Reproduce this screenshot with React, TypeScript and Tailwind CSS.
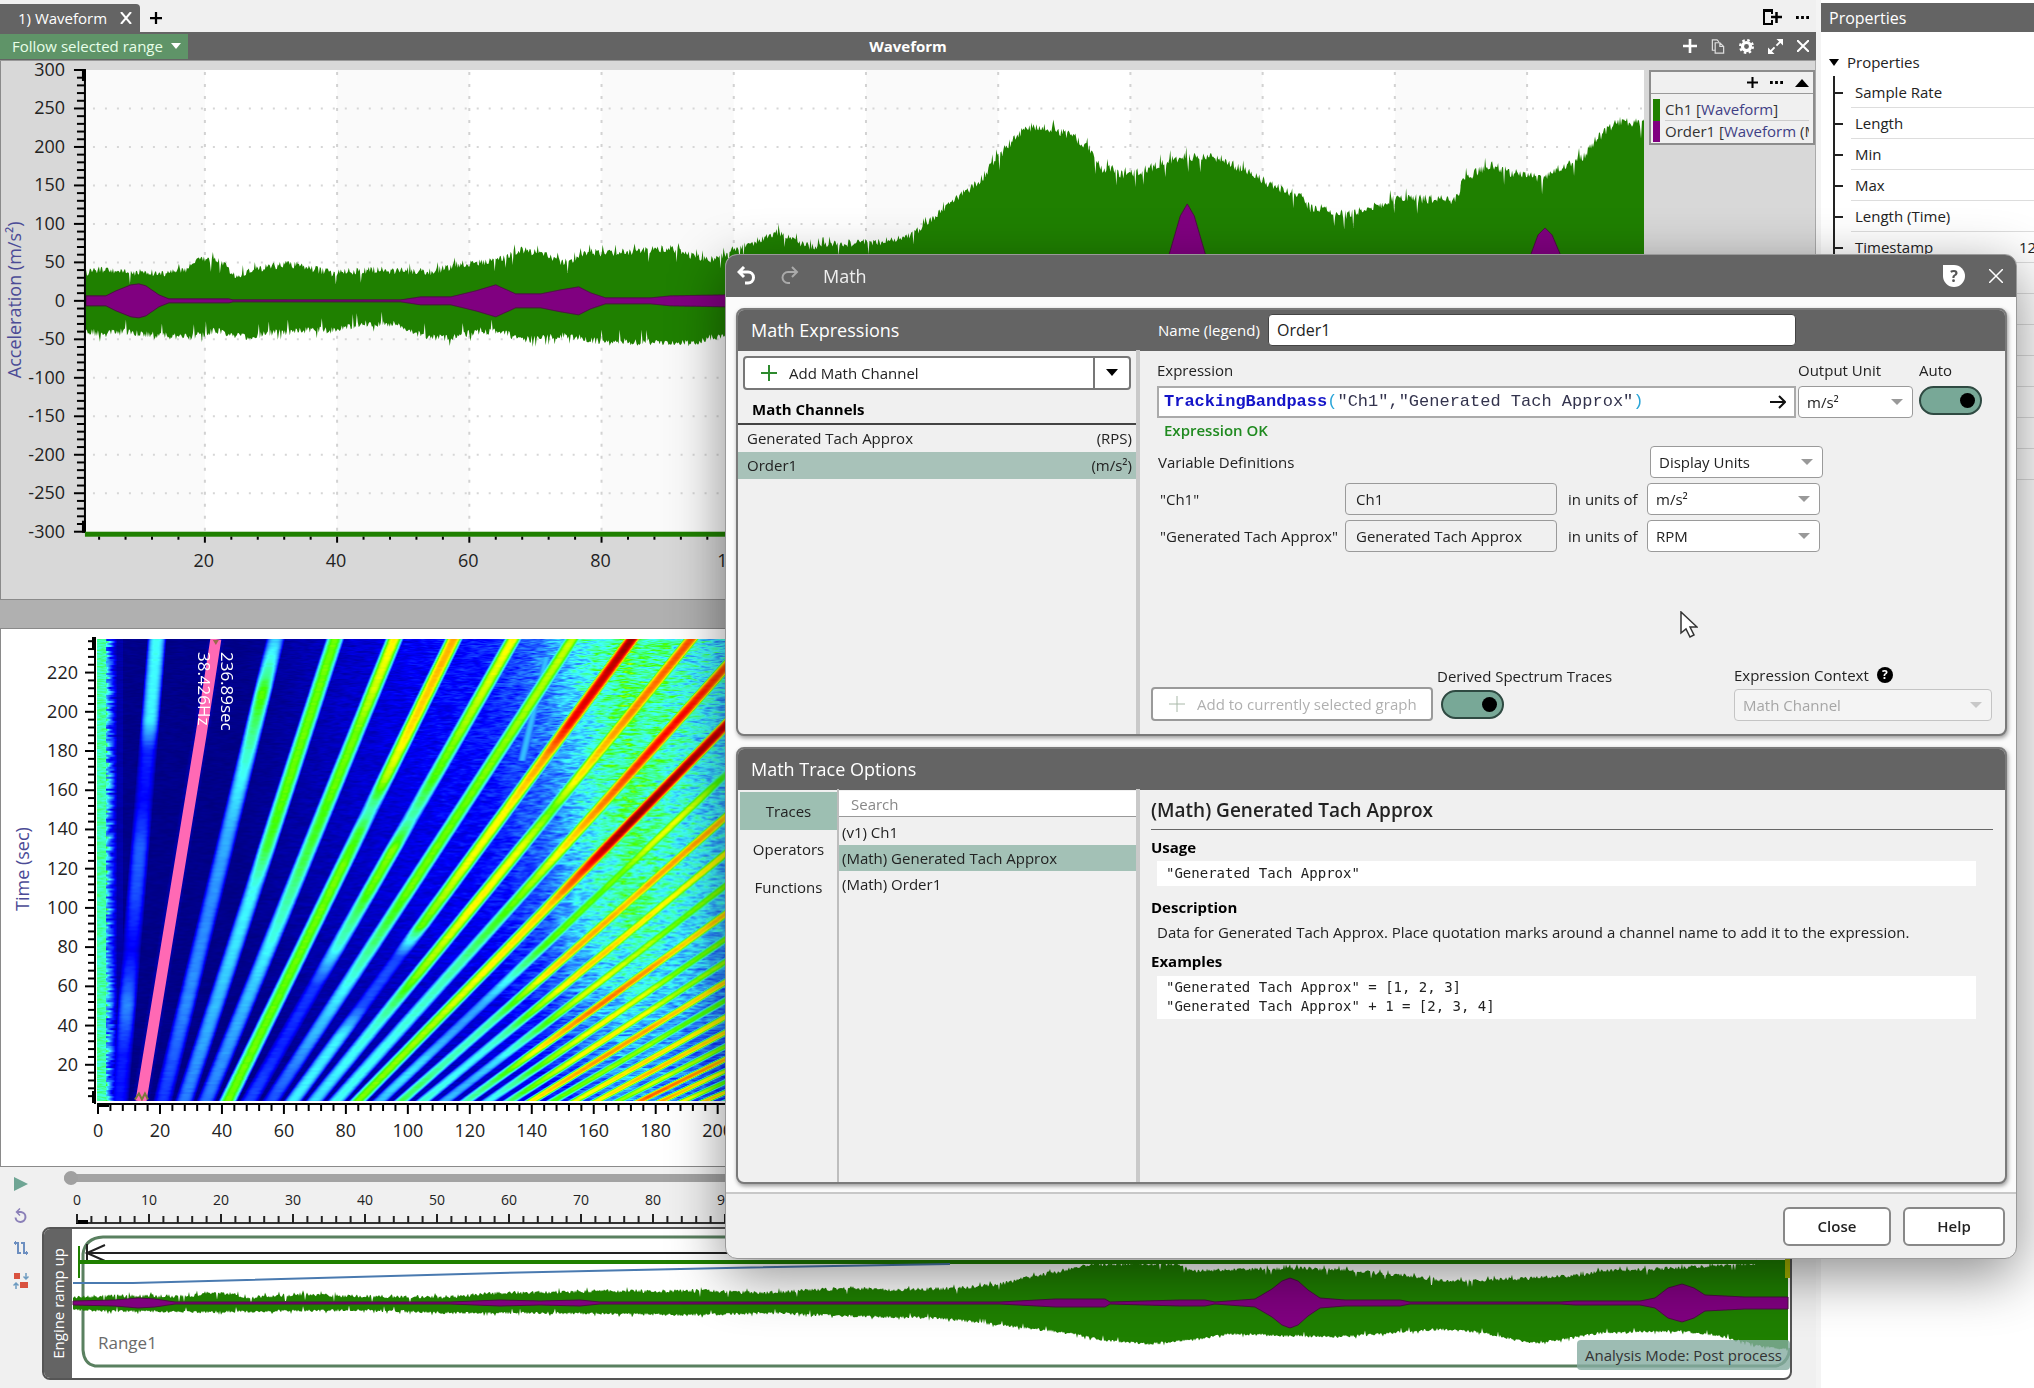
import { useLayoutEffect, useRef, useState } from 'react';
import type { ReactNode } from 'react';

type Point = [number, number];

const CH1_TOP: Point[] = [
  [85, 273], [100, 269], [120, 271], [135, 273], [165, 273], [187, 271], [190, 263], [205, 259], [222, 262], [232, 276],
  [250, 271], [285, 264], [300, 266], [330, 273], [370, 270], [400, 271], [430, 272], [445, 268], [460, 264], [480, 263],
  [500, 258], [520, 250], [545, 255], [560, 262], [575, 260], [585, 252], [600, 253], [630, 252], [670, 248], [690, 256],
  [710, 260], [725, 255], [735, 248], [760, 240], [778, 232], [800, 243], [810, 247], [835, 244], [880, 242], [905, 237],
  [920, 229], [940, 212], [960, 196], [980, 180], [1000, 154], [1010, 143], [1022, 130], [1035, 126], [1055, 130], [1075, 138],
  [1090, 150], [1100, 168], [1115, 170], [1125, 177], [1135, 172], [1150, 168], [1170, 160], [1185, 157], [1220, 158], [1235, 166],
  [1250, 174], [1265, 182], [1280, 188], [1300, 196], [1310, 208], [1325, 208], [1345, 215], [1370, 209], [1395, 198], [1450, 200],
  [1459, 198], [1462, 180], [1490, 165], [1510, 172], [1530, 175], [1541, 180], [1560, 168], [1585, 155], [1595, 140], [1610, 128],
  [1620, 121], [1645, 124],
];

const CH1_BOTTOM: Point[] = [
  [85, 331], [100, 334], [125, 332], [150, 335], [190, 337], [215, 331], [250, 338], [275, 332], [330, 330], [365, 324],
  [395, 324], [415, 334], [445, 339], [480, 331], [500, 332], [525, 340], [565, 335], [600, 342], [640, 342], [690, 344],
  [710, 338], [726, 337], [1645, 420],
];

const ORDER1_HALF: Point[] = [
  [85, 5], [105, 5], [115, 10], [130, 16], [138, 17], [145, 15], [158, 6], [168, 2], [175, 2], [228, 2], [232, 1], [400, 1],
  [420, 4], [450, 4], [475, 10], [495, 16], [515, 7], [540, 7], [560, 11], [578, 14], [590, 8], [605, 3], [650, 3], [670, 5],
  [726, 6], [1150, 6], [1169, 47], [1180, 85], [1187, 97], [1194, 85], [1205, 47], [1224, 6], [1515, 6], [1531, 47], [1538, 66],
  [1545, 73], [1552, 66], [1560, 47], [1576, 6], [1645, 6],
];

const TRACK_TOP: Point[] = [
  [73, 1297], [100, 1296], [190, 1296], [205, 1293], [235, 1294], [245, 1298], [300, 1294], [340, 1296], [440, 1297], [500, 1293],
  [600, 1291], [720, 1291], [760, 1293], [850, 1288], [900, 1290], [960, 1288], [1000, 1284], [1030, 1277], [1060, 1271],
  [1090, 1264], [1180, 1264], [1190, 1271], [1300, 1268], [1345, 1270], [1400, 1275], [1440, 1280], [1465, 1281], [1550, 1277],
  [1585, 1275], [1600, 1271], [1680, 1268], [1720, 1265], [1788, 1262],
];

const TRACK_BOTTOM: Point[] = [
  [73, 1310], [110, 1311], [200, 1312], [360, 1310], [450, 1313], [550, 1313], [690, 1315], [770, 1313], [850, 1316], [940, 1318],
  [1000, 1325], [1060, 1332], [1110, 1341], [1150, 1344], [1200, 1339], [1225, 1334], [1340, 1337], [1440, 1329], [1480, 1332],
  [1530, 1343], [1560, 1340], [1600, 1333], [1680, 1331], [1720, 1336], [1760, 1346], [1788, 1350],
];

const TRACK_HALF: Point[] = [
  [73, 2], [115, 3], [138, 5], [155, 4], [175, 1], [450, 1], [500, 3], [540, 2], [580, 3], [600, 1], [1000, 1], [1055, 4],
  [1105, 4], [1110, 1], [1180, 3], [1205, 3], [1215, 1], [1255, 4], [1272, 14], [1282, 22], [1290, 25], [1298, 22], [1308, 13],
  [1320, 5], [1345, 3], [1400, 3], [1410, 1], [1560, 1], [1575, 2], [1640, 2], [1655, 5], [1668, 15], [1682, 19], [1694, 15],
  [1705, 8], [1745, 6], [1790, 6],
];

// Level (0..1) of each engine order over time in seconds
const ORDER_LEVELS: Point[][] = [
  [[0, 0.14], [25, 0.15], [50, 0.26], [78, 0.12], [105, 0.2], [130, 0.22], [155, 0.13], [180, 0.16], [195, 0.36], [237, 0.38]],
  [[0, 0.05], [237, 0.05]],
  [[0, 0.17], [50, 0.26], [100, 0.26], [140, 0.3], [170, 0.38], [190, 0.46], [210, 0.54], [220, 0.44], [237, 0.32]],
  [[0, 0.24], [60, 0.32], [110, 0.38], [130, 0.5], [160, 0.54], [237, 0.55]],
  [[0, 0.24], [60, 0.32], [90, 0.4], [120, 0.48], [160, 0.54], [190, 0.55], [210, 0.6], [237, 0.64]],
  [[0, 0.55], [60, 0.54], [120, 0.55], [140, 0.5], [150, 0.42], [165, 0.58], [190, 0.66], [237, 0.71]],
  [[0, 0.2], [30, 0.16], [60, 0.18], [80, 0.4], [110, 0.54], [130, 0.56], [145, 0.42], [165, 0.52], [190, 0.57], [237, 0.64]],
  [[0, 0.2], [50, 0.34], [80, 0.46], [110, 0.55], [150, 0.54], [237, 0.6]],
  [[0, 0.36], [35, 0.36], [50, 0.2], [75, 0.2], [90, 0.54], [120, 0.62], [150, 0.64], [175, 0.72], [195, 0.88], [237, 0.97]],
  [[0, 0.34], [40, 0.4], [65, 0.56], [100, 0.64], [130, 0.62], [150, 0.54], [165, 0.64], [195, 0.74], [237, 0.8]],
  [[0, 0.38], [30, 0.38], [60, 0.42], [90, 0.5], [120, 0.6], [145, 0.72], [180, 0.86], [200, 0.87], [237, 0.76]],
  [[0, 0.55], [40, 0.58], [70, 0.64], [100, 0.68], [115, 0.8], [130, 0.94], [145, 0.99], [170, 0.97], [195, 0.92], [237, 0.8]],
];

const FREQUENCY_LEVELS: Point[] = [
  [0, 0.3], [80, 0.34], [110, 0.38], [130, 0.46], [150, 0.57], [165, 0.68], [178, 0.71], [190, 0.63], [205, 0.56], [550, 0.5],
];

const BACKGROUND_LEVELS: Point[] = [
  [0, 0.01], [45, 0.01], [60, 0.03], [90, 0.06], [125, 0.1], [145, 0.2], [160, 0.35], [172, 0.43], [182, 0.38], [205, 0.28], [550, 0.27],
];

const COLOR_STOPS: [number, number, number, number][] = [
  [0, 0, 0, 128],
  [0.125, 0, 0, 255],
  [0.25, 40, 130, 255],
  [0.37, 64, 255, 255],
  [0.45, 64, 255, 150],
  [0.52, 64, 255, 0],
  [0.63, 255, 255, 0],
  [0.75, 255, 128, 0],
  [0.87, 255, 0, 0],
  [1, 128, 0, 0],
];

const PROPERTY_ROWS = ['Sample Rate', 'Length', 'Min', 'Max', 'Length (Time)', 'Timestamp', '', '', '', '', '', '', ''];

function interpolate(points: Point[], x: number) {
  if (x <= points[0][0]) return points[0][1];
  for (let i = 1; i < points.length; i++) {
    if (x <= points[i][0]) {
      const [x0, y0] = points[i - 1];
      const [x1, y1] = points[i];
      return y0 + ((y1 - y0) * (x - x0)) / (x1 - x0);
    }
  }
  return points[points.length - 1][1];
}

function hash(a: number, b: number) {
  let h = Math.imul(a, 374761393) + Math.imul(b, 668265263);
  h = Math.imul(h ^ (h >>> 13), 1274126177);
  return ((h ^ (h >>> 16)) >>> 0) / 4294967296;
}

// Noise that is smooth along x and changes from row to row
function streak(x: number, y: number, length: number) {
  const p = x / length + hash(y, 3);
  const i = Math.floor(p);
  const a = hash(i, y);
  return a + (hash(i + 1, y) - a) * (p - i) - 0.5;
}

function envelope(from: number, to: number, top: (x: number) => number, bottom: (x: number) => number) {
  const upper: string[] = [];
  const lower: string[] = [];
  for (let x = from; x <= to; x++) {
    upper.push(`${x},${top(x).toFixed(1)}`);
    lower.unshift(`${x},${bottom(x).toFixed(1)}`);
  }
  return upper.concat(lower).join(' ');
}

function spike(x: number, seed: number, size: number) {
  const n = hash(x, seed);
  if (n > 0.97) return -size;
  if (n < 0.02) return size * 1.5;
  return (n - 0.5) * size;
}

const range = (start: number, end: number, step: number) =>
  Array.from({ length: Math.floor((end - start) / step) + 1 }, (_, i) => start + i * step);

const waveX = (v: number) => 71.7 + v * 6.615;
const waveY = (v: number) => 240 - v * 0.77;

function WaveformChart() {
  const green = envelope(
    85,
    1644,
    (x) => interpolate(CH1_TOP, x) - 61 + spike(x, 1, x > 950 ? 10 : 8),
    (x) => interpolate(CH1_BOTTOM, x) - 61 - spike(x, 2, 8),
  );
  const purple = envelope(
    85,
    1644,
    (x) => 240 - interpolate(ORDER1_HALF, x),
    (x) => 240 + interpolate(ORDER1_HALF, x),
  );
  return (
    <svg viewBox="0 0 1649 538" className="block min-w-0 flex-1" role="img" aria-label="Waveform">
      <rect x="84" y="9" width="1560" height="463" fill="#fff" />
      {range(0, 200, 40).map((v) => (
        <rect key={v} x={Math.max(85, waveX(v))} y="9" width={waveX(v + 20) - Math.max(85, waveX(v))} height="463" fill="#fafafa" />
      ))}
      {range(-250, 250, 50).map((v) => (
        <line key={v} x1="92" x2="1644" y1={waveY(v)} y2={waveY(v)} stroke="#d6d6d6" strokeWidth="2" strokeDasharray="2 10" />
      ))}
      {range(20, 220, 20).map((v) => (
        <line key={v} y1="11" y2="472" x1={waveX(v)} x2={waveX(v)} stroke="#d2d2d2" strokeWidth="2" strokeDasharray="3 9" />
      ))}
      <polygon points={green} fill="#1f8000" />
      <polygon points={purple} fill="#800080" stroke="#4a1040" strokeWidth="1" />
      <line x1="84" x2="84" y1="8" y2="472" stroke="#000" strokeWidth="2" />
      <rect x="81" y="9" width="4" height="11" />
      <rect x="81" y="460" width="4" height="12" />
      {range(-300, 300, 10).map((v) => (
        <line key={v} x1={v % 50 ? 76 : 73} x2="84" y1={waveY(v)} y2={waveY(v)} stroke="#000" strokeWidth="2" />
      ))}
      {range(-300, 300, 50).map((v) => (
        <text key={v} x="64" y={waveY(v) + 6} textAnchor="end" fontSize="18" fill="#222">
          {v}
        </text>
      ))}
      <rect x="84" y="471" width="1560" height="5" fill="#1f8000" />
      {range(4, 236, 4).map((v) => (
        <line key={v} x1={waveX(v)} x2={waveX(v)} y1="476" y2={v % 20 ? 479 : 482} stroke="#000" strokeWidth="2" />
      ))}
      {range(20, 220, 20).map((v) => (
        <text key={v} x={waveX(v) - 1} y="506" textAnchor="middle" fontSize="18" fill="#222">
          {v}
        </text>
      ))}
      <text transform="translate(20 239) rotate(-90)" textAnchor="middle" fontSize="18" fill="#4b4b96">
        Acceleration (m/s²)
      </text>
    </svg>
  );
}

function levelColor(v: number): [number, number, number] {
  let i = 1;
  while (i < COLOR_STOPS.length - 1 && v > COLOR_STOPS[i][0]) i++;
  const [v0, r0, g0, b0] = COLOR_STOPS[i - 1];
  const [v1, r1, g1, b1] = COLOR_STOPS[i];
  const k = (v - v0) / (v1 - v0);
  return [r0 + (r1 - r0) * k, g0 + (g1 - g0) * k, b0 + (b1 - b0) * k];
}

function Spectrogram() {
  const ref = useRef<HTMLCanvasElement>(null);

  useLayoutEffect(() => {
    const canvas = ref.current;
    const ctx = canvas?.getContext('2d');
    if (!canvas || !ctx) return;
    const { width, height } = canvas;
    const image = ctx.createImageData(width, height);
    for (let y = 0; y < height; y++) {
      const t = 236.9 - y / 1.961;
      const f1 = 6.95 + t * 0.0515;
      const row = y >> 1;
      const floor = 0.6 + 0.4 * Math.min(1, t / 100);
      for (let x = 0; x < width; x++) {
        const f = x / 3.102;
        const noise = streak(x, row, 7);
        const fine = streak(x, y + 9000, 4);
        let level = interpolate(BACKGROUND_LEVELS, f) * floor;
        if (f > 60) level += Math.min(0.05, (f - 60) * 0.001) * (t / 237);
        level += (noise * 0.6 + fine * 0.5) * (0.02 + Math.min(0.24, level * 0.65));
        if (x < 9) level = 0.43 + fine * 0.1;
        else if (x < 26) level += Math.max(0, (0.32 + noise * 0.4) * (1 - (x - 8) / 12)) + 0.03;

        // Structural resonance that crosses the orders near the top
        if (t > 175 && t < 228) {
          const r = Math.abs(f - 137 - (t - 175) * 0.15) * 3.102;
          level = Math.max(level, 0.31 * (1 - Math.pow(r / 7, 2)));
        }

        const order = Math.max(1, Math.round(f / f1));
        const d = Math.abs(f - order * f1) * 3.102;
        let peak = interpolate(FREQUENCY_LEVELS, f);
        if (order <= 12) peak = interpolate(ORDER_LEVELS[order - 1], t);
        else peak += 0.08 * Math.sin(order * 2.3) + 0.06 * Math.sin(t / 11 + order);
        const skirt = order > 12 ? 9 : 10;
        level = Math.max(level, peak * (1 - Math.pow(d / skirt, 2.8)) + noise * 0.02);

        const [r, g, b] = levelColor(Math.min(1, Math.max(0, level)));
        const i = (y * width + x) * 4;
        image.data[i] = r;
        image.data[i + 1] = g;
        image.data[i + 2] = b;
        image.data[i + 3] = 255;
      }
    }
    ctx.putImageData(image, 0, 0);
  }, []);

  return (
    <div className="relative">
      <canvas ref={ref} width={1696} height={463} className="block w-full" />
      <svg viewBox="0 0 1696 463" className="absolute inset-0 h-full w-full">
        <polyline points="44,463 64,341 84,219 104,97 119,0" fill="none" stroke="#ff69b4" strokeWidth="11" />
        <path d="M38 461l4-6 3 6 3-6 3 6" fill="none" stroke="#7a7a3a" strokeWidth="2" />
        <path d="M116 1h6l-3 5z" fill="#9a6a4a" />
        <g fill="#fff" fontSize="17">
          <text transform="translate(101 13) rotate(90)">38.426Hz</text>
          <text transform="translate(124 13) rotate(90)">236.89sec</text>
        </g>
      </svg>
    </div>
  );
}

function SpectrogramPanel() {
  const ty = (t: number) => 475 - t * 1.961;
  const fx = (f: number) => 1 + f * 3.102;
  return (
    <section className="flex items-start border border-[#8a8a8a] bg-white" aria-label="Spectrogram">
      <svg viewBox="0 0 96 500" className="block w-24 shrink-0">
        <line x1="94" x2="94" y1="8" y2="475" stroke="#000" strokeWidth="2" />
        <rect x="91" y="8" width="4" height="13" />
        <rect x="91" y="462" width="4" height="12" />
        {range(4, 236, 4).map((t) => (
          <line key={t} x1={t % 20 ? 87 : 84} x2="94" y1={ty(t)} y2={ty(t)} stroke="#000" strokeWidth="2" />
        ))}
        {range(20, 220, 20).map((t) => (
          <text key={t} x="77" y={ty(t) + 6} textAnchor="end" fontSize="18" fill="#222">
            {t}
          </text>
        ))}
        <text transform="translate(28 240) rotate(-90)" textAnchor="middle" fontSize="18" fill="#4b4b96">
          Time (sec)
        </text>
      </svg>
      <div className="min-w-0 flex-1 pt-[10px] pr-6">
        <Spectrogram />
        <svg viewBox="0 0 1696 65" className="block w-full overflow-visible">
          <line x1="0" x2="1696" y1="3" y2="3" stroke="#000" strokeWidth="2" />
          <rect x="0" y="2" width="12" height="4" />
          {range(0, 540, 4).map((f) => (
            <line key={f} x1={fx(f)} x2={fx(f)} y1="3" y2={f % 20 ? 10 : 13} stroke="#000" strokeWidth="2" />
          ))}
          {range(0, 540, 20).map((f) => (
            <text key={f} x={fx(f)} y="36" textAnchor="middle" fontSize="18" fill="#222">
              {f}
            </text>
          ))}
        </svg>
      </div>
    </section>
  );
}

function Timeline() {
  const rx = (v: number) => 35 + v * 7.2;
  const green = envelope(
    73,
    1788,
    (x) => interpolate(TRACK_TOP, x) + spike(x, 5, 4),
    (x) => interpolate(TRACK_BOTTOM, x) - spike(x, 6, 3),
  );
  const purple = envelope(
    73,
    1788,
    (x) => 1303 - interpolate(TRACK_HALF, x),
    (x) => 1303 + interpolate(TRACK_HALF, x),
  );
  return (
    <section className="flex bg-[#f0f0f0] pr-6" aria-label="Timeline">
      <div className="flex w-[42px] shrink-0 flex-col items-center gap-4 pt-[9px]">
        <button type="button" aria-label="Play">
          <svg width="16" height="16" viewBox="0 0 16 16" className="block">
            <path d="M1 1l14 7-14 7z" fill="#6fa594" />
          </svg>
        </button>
        <button type="button" aria-label="Loop">
          <svg width="16" height="16" viewBox="0 0 16 16" className="block" fill="none" stroke="#8b80b8" strokeWidth="2">
            <path d="M4 4h4a5 5 0 1 1-5.500 5.500" />
            <path d="M7 0.500L3.500 4 7 7.500" strokeWidth="1.500" />
          </svg>
        </button>
        <button type="button" aria-label="Swap range">
          <svg width="16" height="16" viewBox="0 0 16 16" className="block" fill="none" stroke="#6d8fc0" strokeWidth="2">
            <path d="M1 3h4v10h3M15 13h-4V3H8" />
            <path d="M3 1L1 3l2 2M13 11l2 2-2 2" strokeWidth="1" />
          </svg>
        </button>
        <button type="button" aria-label="Arrange">
          <svg width="16" height="18" viewBox="0 0 16 18" className="block">
            <path d="M1 1h6v6H1zM7 10h8v6H7z" fill="#d9523f" />
            <path d="M13 1v6M10.500 4.500L13 7l2.500-2.500M3 17v-6M0.500 13.500L3 11l2.500 2.500" fill="none" stroke="#6d9bc0" strokeWidth="1.500" />
          </svg>
        </button>
      </div>
      <div className="min-w-0 flex-1">
        <input
          type="range"
          min={0}
          max={240}
          defaultValue={0}
          aria-label="Playback position"
          className="mt-[7px] ml-[22px] block h-2 w-[calc(100%-22px)] appearance-none rounded bg-[#a3a3a3] [&::-webkit-slider-thumb]:h-[14px] [&::-webkit-slider-thumb]:w-[14px] [&::-webkit-slider-thumb]:appearance-none [&::-webkit-slider-thumb]:rounded-full [&::-webkit-slider-thumb]:bg-[#a0a0a0]"
        />
        <svg viewBox="0 0 1750 45" className="block w-full">
          <line x1="34" x2="1750" y1="41" y2="41" stroke="#333" strokeWidth="2" />
          <rect x="34" y="38" width="12" height="4" />
          {range(0, 236, 2).map((v) => (
            <line key={v} x1={rx(v)} x2={rx(v)} y1={v % 10 ? 34 : 32} y2="41" stroke="#222" strokeWidth="2" />
          ))}
          {range(0, 230, 10).map((v) => (
            <text key={v} x={rx(v)} y="23" textAnchor="middle" fontSize="14" fontWeight="500" fill="#222">
              {v}
            </text>
          ))}
        </svg>
        <div className="flex overflow-hidden rounded-lg border-2 border-[#555] bg-white">
          <div className="flex w-7 shrink-0 items-center justify-center bg-[#646464]">
            <span className="rotate-180 text-[15px] font-medium whitespace-nowrap text-white [writing-mode:vertical-rl]">Engine ramp up</span>
          </div>
          <div className="relative min-w-0 flex-1">
            <svg viewBox="72 1229 1718 149" className="block w-full">
              <path d="M83 1262v-8q2-16 20-17H1790M83 1262V1350q1 14 12 16H1776q12-2 14-18" fill="none" stroke="#5a8060" strokeWidth="3" />
              <path d="M87 1253H1790M105 1245l-18 8 18 8" fill="none" stroke="#222" strokeWidth="2" />
              <path d="M87 1244v18" stroke="#222" strokeWidth="2" />
              <path d="M79 1246v32" stroke="#1f8000" strokeWidth="2" />
              <path d="M79 1262H1790" stroke="#1f8000" strokeWidth="4" />
              <path d="M73 1283h60L500 1273l226-5 224-4" fill="none" stroke="#4a7ab0" strokeWidth="2" />
              <polygon points={green} fill="#1f8000" />
              <polygon points={purple} fill="#800080" stroke="#4a1040" strokeWidth="1" />
              <rect x="1785" y="1259" width="5" height="19" fill="#a8b400" />
              <text x="98" y="1349" fontSize="17" fill="#6a6a6a">
                Range1
              </text>
            </svg>
            <div className="absolute right-0 bottom-2 rounded bg-[#85aba0]/80 px-2 py-1 text-[15px] text-[#333]">Analysis Mode: Post process</div>
          </div>
        </div>
      </div>
    </section>
  );
}

function Dropdown({ label, value, className, disabled }: { label: string; value: string; className: string; disabled?: boolean }) {
  return (
    <span className={`relative block ${className}`}>
      <select
        aria-label={label}
        disabled={disabled}
        className={`block h-8 w-full appearance-none rounded border px-2 text-[15px] ${
          disabled ? 'border-[#c4c4c4] bg-[#f4f4f4] text-[#a6a6a6]' : 'border-[#9a9a9a] bg-white text-[#222]'
        }`}
      >
        <option>{value}</option>
      </select>
      <svg viewBox="0 0 12 8" className={`pointer-events-none absolute top-3 right-[10px] h-2 w-3 ${disabled ? 'fill-[#c8c8c8]' : 'fill-[#999]'}`}>
        <path d="M0 1h12L6 7z" />
      </svg>
    </span>
  );
}

function Toggle({ label }: { label: string }) {
  const [on, setOn] = useState(true);
  return (
    <input
      type="checkbox"
      aria-label={label}
      checked={on}
      onChange={(e) => setOn(e.target.checked)}
      className="relative block h-[29px] w-[63px] appearance-none rounded-full border-2 border-[#2f4a42] bg-[#b8b8b8] before:absolute before:top-[5px] before:left-[5px] before:h-[15px] before:w-[15px] before:rounded-full before:bg-black checked:bg-[#78a897] checked:before:left-[39px]"
    />
  );
}

function Plus({ className }: { className: string }) {
  return (
    <svg viewBox="0 0 16 16" className={className} fill="none" stroke="currentColor">
      <path d="M8 0v16M0 8h16" />
    </svg>
  );
}

function Panel({ title, extra, children }: { title: string; extra?: ReactNode; children: ReactNode }) {
  return (
    <section className="flex flex-col overflow-hidden rounded-lg border-2 border-[#7a7a7a] bg-[#f0f0f0] shadow-[1px_2px_4px_rgba(0,0,0,0.4)]">
      <header className="-m-px flex h-[42px] items-center bg-[#646464]">
        <h2 className="w-[405px] shrink-0 pl-[14px] text-lg text-white">{title}</h2>
        {extra}
      </header>
      {children}
    </section>
  );
}

function MathExpressions() {
  const [name, setName] = useState('Order1');
  const [selected, setSelected] = useState('Order1');
  const channels = [
    { name: 'Generated Tach Approx', unit: '(RPS)' },
    { name: 'Order1', unit: '(m/s²)' },
  ];
  return (
    <Panel
      title="Math Expressions"
      extra={
        <div className="flex flex-1 items-center gap-2 pl-4">
          <label htmlFor="legend-name" className="w-[102px] text-[15px] whitespace-nowrap text-white">
            Name (legend)
          </label>
          <input
            id="legend-name"
            value={name}
            onChange={(e) => setName(e.target.value)}
            className="h-8 w-[528px] rounded border border-[#444] bg-white px-2 text-base text-[#222]"
          />
        </div>
      }
    >
      <div className="flex h-[384px]">
        <div className="w-[402px] shrink-0 border-r-4 border-[#c9c9c9] pt-[6px]">
          <div className="mx-[5px] flex h-[34px] rounded border-2 border-[#777] bg-white text-[15px] text-[#222]">
            <button type="button" className="flex flex-1 items-center gap-3 pl-4">
              <Plus className="h-4 w-4 stroke-2 text-[#2d8a2d]" />
              Add Math Channel
            </button>
            <button type="button" aria-label="More channel types" className="flex w-9 items-center justify-center border-l-2 border-[#777]">
              <svg viewBox="0 0 12 8" className="h-2 w-3">
                <path d="M0 0h12L6 7z" />
              </svg>
            </button>
          </div>
          <table className="mt-[5px] w-full text-[15px] leading-[27px] text-[#222]">
            <thead>
              <tr className="border-b-2 border-[#444]">
                <th colSpan={2} className="pl-[14px] text-left leading-[28px] font-bold text-black">
                  Math Channels
                </th>
              </tr>
            </thead>
            <tbody>
              {channels.map((channel) => (
                <tr
                  key={channel.name}
                  onClick={() => setSelected(channel.name)}
                  className={selected === channel.name ? 'bg-[#a8c2b9]' : ''}
                >
                  <td className="pl-[9px]">{channel.name}</td>
                  <td className="pr-1 text-right">{channel.unit}</td>
                </tr>
              ))}
            </tbody>
          </table>
        </div>

        <div className="flex min-w-0 flex-1 flex-col justify-between pt-2 pr-[13px] pb-[13px] pl-[11px] text-[15px] text-[#222]">
          <div>
            <div className="flex gap-[2px] pl-[6px]">
              <div className="w-[639px]">
                <div className="h-7 leading-6">Expression</div>
                <div className="flex h-8 items-center border-2 border-[#aaa] bg-white pr-2 pl-[5px]">
                  <code className="flex-1 font-['Liberation_Mono',monospace] text-[17px] leading-5 whitespace-pre text-[#33334d]">
                    <b className="text-[#1414c8]">TrackingBandpass</b>
                    <span className="text-[#2aa5d8]">(</span>"Ch1","Generated Tach Approx"
                    <span className="text-[#2aa5d8]">)</span>
                  </code>
                  <svg viewBox="0 0 16 14" className="h-[14px] w-4" fill="none" stroke="#111" strokeWidth="2">
                    <path d="M0 7h14M9 1l6 6-6 6" />
                  </svg>
                </div>
              </div>
              <div className="w-[119px]">
                <div className="h-7 leading-6">Output Unit</div>
                <Dropdown label="Output Unit" value="m/s²" className="w-[115px]" />
              </div>
              <div>
                <div className="h-7 leading-6">Auto</div>
                <Toggle label="Auto" />
              </div>
            </div>
            <div className="mb-[3px] pl-[13px] leading-[25px] font-semibold text-[#1f8a1f]">Expression OK</div>
            <div className="flex items-center pl-[7px]">
              <span className="w-[492px]">Variable Definitions</span>
              <Dropdown label="Display Units" value="Display Units" className="w-[173px]" />
            </div>
            {[
              { id: 'ch1', variable: '"Ch1"', channel: 'Ch1', unit: 'm/s²' },
              { id: 'tach', variable: '"Generated Tach Approx"', channel: 'Generated Tach Approx', unit: 'RPM' },
            ].map((row) => (
              <div key={row.id} className="mt-[5px] flex items-center pl-[9px]">
                <label htmlFor={row.id} className="w-[185px] whitespace-nowrap">
                  {row.variable}
                </label>
                <input id={row.id} readOnly value={row.channel} className="h-8 w-[212px] rounded border border-[#9a9a9a] bg-[#f0f0f0] px-[10px]" />
                <span className="w-[90px] pl-[11px]">in units of</span>
                <Dropdown label={`${row.channel} unit`} value={row.unit} className="w-[173px]" />
              </div>
            ))}
          </div>

          <div className="flex items-end">
            <button
              type="button"
              disabled
              className="flex h-[34px] w-[282px] items-center gap-3 rounded border-2 border-[#9a9a9a] bg-white pl-4 whitespace-nowrap text-[#b0b0b0]"
            >
              <Plus className="h-4 w-4 text-[#a8b8a8]" />
              Add to currently selected graph
            </button>
            <div className="pl-1">
              <div className="leading-7">Derived Spectrum Traces</div>
              <div className="pb-[2px] pl-1">
                <Toggle label="Derived Spectrum Traces" />
              </div>
            </div>
            <div className="ml-auto w-[258px]">
              <div className="flex items-center gap-2 leading-7">
                Expression Context
                <span className="flex h-4 w-4 items-center justify-center rounded-full bg-black text-xs font-bold text-white">?</span>
              </div>
              <Dropdown label="Expression Context" value="Math Channel" className="w-full" disabled />
            </div>
          </div>
        </div>
      </div>
    </Panel>
  );
}

function MathTraceOptions() {
  const [tab, setTab] = useState('Traces');
  const [trace, setTrace] = useState('(Math) Generated Tach Approx');
  return (
    <Panel title="Math Trace Options">
      <div className="flex h-[393px] text-[15px] text-[#222]">
        <nav className="flex w-[101px] shrink-0 flex-col border-r-2 border-[#bdbdbd] pt-[3px] pl-[2px]">
          {['Traces', 'Operators', 'Functions'].map((item) => (
            <button key={item} type="button" onClick={() => setTab(item)} className={`h-[38px] ${tab === item ? 'bg-[#9dbfb2]' : ''}`}>
              {item}
            </button>
          ))}
        </nav>
        <div className="w-[301px] shrink-0 border-r-4 border-[#c9c9c9]">
          <input
            type="search"
            placeholder="Search"
            aria-label="Search traces"
            className="mt-[2px] block h-[26px] w-full border-b border-[#999] bg-white px-3 placeholder:text-[#888]"
          />
          <ul className="pt-[2px]">
            {['(v1) Ch1', '(Math) Generated Tach Approx', '(Math) Order1'].map((item) => (
              <li key={item}>
                <button
                  type="button"
                  onClick={() => setTrace(item)}
                  className={`block h-[26px] w-full pl-[3px] text-left leading-[26px] ${trace === item ? 'bg-[#a3c1b6]' : ''}`}
                >
                  {item}
                </button>
              </li>
            ))}
          </ul>
        </div>
        <article className="min-w-0 flex-1 pr-3 pl-[11px] text-black">
          <h3 className="h-[41px] border-b border-[#666] text-[19px] leading-[42px] font-semibold text-[#222]">{trace}</h3>
          <h4 className="pt-1 leading-[27px] font-bold">Usage</h4>
          <pre className="mr-[17px] ml-[6px] bg-white px-[9px] py-[3px] font-['DejaVu_Sans_Mono',monospace] text-sm leading-[19px] text-[#222]">
            "Generated Tach Approx"
          </pre>
          <h4 className="pt-2 leading-[27px] font-bold">Description</h4>
          <p className="pl-[6px] leading-[22px] text-[#222]">
            Data for Generated Tach Approx. Place quotation marks around a channel name to add it to the expression.
          </p>
          <h4 className="pt-1 leading-[29px] font-bold">Examples</h4>
          <pre className="mr-[17px] ml-[6px] bg-white px-[9px] pt-[2px] pb-[3px] font-['DejaVu_Sans_Mono',monospace] text-sm leading-[19px] text-[#222]">
            {'"Generated Tach Approx" = [1, 2, 3]\n"Generated Tach Approx" + 1 = [2, 3, 4]'}
          </pre>
        </article>
      </div>
    </Panel>
  );
}

function MathDialog() {
  return (
    <div
      role="dialog"
      aria-label="Math"
      className="absolute top-[254px] right-[17px] left-[725px] flex flex-col overflow-hidden rounded-xl border border-[#999] bg-[#f0f0f0] shadow-[0_16px_56px_rgba(0,0,0,0.45)]"
    >
      <header className="flex h-[42px] items-center bg-[#646464] pr-[13px] pl-[11px] text-white">
        <button type="button" aria-label="Undo">
          <svg viewBox="0 0 20 20" className="h-5 w-5" fill="none" stroke="currentColor" strokeWidth="3">
            <path d="M7 1L2 6l5 5M2 6h9a5.500 5.500 0 0 1 0 11H8" />
          </svg>
        </button>
        <button type="button" aria-label="Redo" className="ml-[22px] text-[#aaa]">
          <svg viewBox="0 0 20 20" className="h-5 w-5" fill="none" stroke="currentColor" strokeWidth="2">
            <path d="M13 1l5 5-5 5M18 6H9a5.500 5.500 0 0 0 0 11h2" />
          </svg>
        </button>
        <h1 className="ml-6 flex-1 text-lg text-[#eee]">Math</h1>
        <button type="button" aria-label="Help" className="flex h-[22px] w-[22px] items-center justify-center rounded-full rounded-tl-none bg-white text-base font-bold text-[#555]">
          ?
        </button>
        <button type="button" aria-label="Close dialog" className="ml-6">
          <svg viewBox="0 0 14 14" className="h-[14px] w-[14px]" fill="none" stroke="currentColor" strokeWidth="1.500">
            <path d="M0 0l14 14M14 0L0 14" />
          </svg>
        </button>
      </header>
      <div className="flex flex-col gap-[11px] border-b-2 border-[#c8c8c8] bg-[#fbfbfb] pt-[11px] pr-[9px] pb-2 pl-[10px]">
        <MathExpressions />
        <MathTraceOptions />
      </div>
      <footer className="flex h-16 items-center justify-end gap-3 pr-[11px]">
        <button type="button" className="h-[39px] w-[108px] rounded-md border-2 border-[#888] bg-white text-[15px] font-semibold text-[#222]">
          Close
        </button>
        <button type="button" className="h-[39px] w-[102px] rounded-md border-2 border-[#888] bg-white text-[15px] font-semibold text-[#222]">
          Help
        </button>
      </footer>
    </div>
  );
}

function Dots({ className }: { className: string }) {
  return (
    <svg viewBox="0 0 14 3" className={className} fill="currentColor">
      <path d="M0 0h3v3H0zM5.500 0h3v3h-3zM11 0h3v3h-3z" />
    </svg>
  );
}

function WaveformPanel() {
  return (
    <>
      <div className="flex h-8 items-end bg-[#f0f0f0]">
        <div className="flex h-7 w-[140px] items-center justify-between rounded-tr bg-[#646464] pr-2 pl-[18px] text-[15px] text-white">
          1) Waveform
          <button type="button" aria-label="Close tab">
            <svg viewBox="0 0 12 12" className="h-3 w-3" fill="none" stroke="currentColor" strokeWidth="2">
              <path d="M1 0l10 12M11 0L1 12" />
            </svg>
          </button>
        </div>
        <button type="button" aria-label="New tab" className="mb-2 ml-[10px]">
          <Plus className="h-3 w-3 stroke-[3]" />
        </button>
        <div className="mb-[6px] ml-auto flex items-center gap-[14px] pr-[7px]">
          <button type="button" aria-label="Add column">
            <svg viewBox="0 0 20 18" className="block h-[18px] w-5" fill="none" stroke="#000" strokeWidth="2">
              <path d="M10 6V2H2v14h8v-4" />
              <path d="M1 2.500h10" strokeWidth="3" />
              <path d="M9 9h11M14.500 4v11" strokeWidth="2.500" />
            </svg>
          </button>
          <button type="button" aria-label="Tab options">
            <Dots className="h-[3px] w-[13px]" />
          </button>
        </div>
      </div>
      <div className="grid h-[29px] grid-cols-[1fr_auto_1fr] items-center border-b border-[#999] bg-[#646464] text-white">
        <button type="button" className="flex h-[25px] w-[188px] items-center gap-2 bg-[#5f9468] pl-3 text-[15px] whitespace-nowrap text-[#e8ffe8]">
          Follow selected range
          <svg viewBox="0 0 10 6" className="h-[6px] w-[10px] fill-white">
            <path d="M0 0h10L5 6z" />
          </svg>
        </button>
        <h2 className="text-[15px] font-bold">Waveform</h2>
        <div className="flex items-center justify-end gap-[14px] pr-[7px]">
          <button type="button" aria-label="Add trace">
            <Plus className="h-[14px] w-[14px] stroke-[3]" />
          </button>
          <button type="button" aria-label="Copy">
            <svg viewBox="0 0 14 16" className="h-[15px] w-[14px]" fill="none" stroke="#ddd" strokeWidth="1.300">
              <path d="M4 12H1V1h5l2 2M4 4h5l4 4v7H4zM9 4v4h4" />
            </svg>
          </button>
          <button type="button" aria-label="Settings">
            <svg viewBox="0 0 16 16" className="h-[15px] w-[15px]" fill="none" stroke="#fff">
              <circle cx="8" cy="8" r="4.300" strokeWidth="3.400" />
              <circle cx="8" cy="8" r="6.800" strokeWidth="2.400" strokeDasharray="2.670 2.670" />
            </svg>
          </button>
          <button type="button" aria-label="Expand">
            <svg viewBox="0 0 16 16" className="h-[15px] w-[15px]" fill="#fff">
              <path d="M9 0h7v7zM0 9v7h7z" />
              <path d="M3 13l4-4M9 7l4-4" stroke="#fff" strokeWidth="2" />
            </svg>
          </button>
          <button type="button" aria-label="Close graph">
            <svg viewBox="0 0 12 12" className="h-3 w-3" fill="none" stroke="currentColor" strokeWidth="2">
              <path d="M0 0l12 12M12 0L0 12" />
            </svg>
          </button>
        </div>
      </div>
      <section className="flex border-b border-l border-[#8a8a8a] bg-[#d8d8d8]" aria-label="Waveform graph">
        <WaveformChart />
        <aside className="w-[167px] shrink-0 border-r border-[#aaa] pt-[9px]">
          <div className="border-2 border-[#8c8c8c] bg-[#f0f0f0]">
            <div className="flex h-[22px] items-center justify-end gap-3 border-b border-[#999] pr-1">
              <button type="button" aria-label="Add to legend">
                <Plus className="h-[11px] w-[11px] stroke-[3]" />
              </button>
              <button type="button" aria-label="Legend options">
                <Dots className="h-[3px] w-[13px]" />
              </button>
              <button type="button" aria-label="Collapse legend">
                <svg viewBox="0 0 14 8" className="h-2 w-[14px]">
                  <path d="M7 0l7 8H0z" />
                </svg>
              </button>
            </div>
            <ul className="pt-[5px] pr-1 pb-px pl-[2px] text-[15px] leading-[21px] whitespace-nowrap text-[#333]">
              <li className="flex gap-[5px]">
                <span className="w-[7px] shrink-0 bg-[#1f8000]" />
                <span className="min-w-0 flex-1 overflow-hidden border-b border-[#ccc]">
                  Ch1 [<span className="text-[#3f3f85]">Waveform</span>]
                </span>
              </li>
              <li className="flex gap-[5px]">
                <span className="w-[7px] shrink-0 bg-[#800080]" />
                <span className="min-w-0 flex-1 overflow-hidden">
                  Order1 [<span className="text-[#3f3f85]">Waveform</span> (Math)]
                </span>
              </li>
            </ul>
          </div>
        </aside>
      </section>
    </>
  );
}

function Properties() {
  return (
    <aside className="w-[213px] shrink-0 bg-white pt-[3px] text-[#222]">
      <h2 className="flex h-[29px] items-center bg-[#646464] pl-2 text-base text-white">Properties</h2>
      <button type="button" className="mt-[16px] flex h-[28px] items-center gap-2 pl-[8px] text-[15px]">
        <svg viewBox="0 0 10 7" className="h-[7px] w-[10px]">
          <path d="M0 0h10L5 7z" />
        </svg>
        Properties
      </button>
      <dl className="ml-3 border-l-2 border-[#222] pt-px">
        {PROPERTY_ROWS.map((row, i) => (
          <div key={i} className="flex h-[31px] items-center text-[15px] whitespace-nowrap">
            <span className={`w-2 border-t-2 ${row ? 'border-[#222]' : 'border-transparent'}`} />
            <dt className="ml-2 flex h-full flex-1 items-center border-b border-[#ddd] pl-1">{row}</dt>
            {row === 'Timestamp' && <dd className="flex h-full w-[15px] items-center border-b border-[#ddd]">12</dd>}
          </div>
        ))}
      </dl>
    </aside>
  );
}

export default function App() {
  return (
    <main className="relative flex min-h-screen overflow-hidden bg-white font-['Open_Sans','Noto_Sans',sans-serif] text-black">
      <div className="flex min-w-0 flex-1 flex-col bg-[#f0f0f0]">
        <WaveformPanel />
        <div className="h-[28px] bg-[#b0b0b0]" />
        <SpectrogramPanel />
        <Timeline />
      </div>
      <div className="w-[5px] shrink-0 bg-[#f4f4f4]" />
      <Properties />
      <MathDialog />
      <svg viewBox="0 0 18 28" className="pointer-events-none absolute top-[611px] left-[1680px] h-7 w-[18px]" fill="#fff" stroke="#333" strokeWidth="1.500">
        <path d="M1 1v21l5-4 4 8 4-2-4-8h7z" />
      </svg>
    </main>
  );
}
